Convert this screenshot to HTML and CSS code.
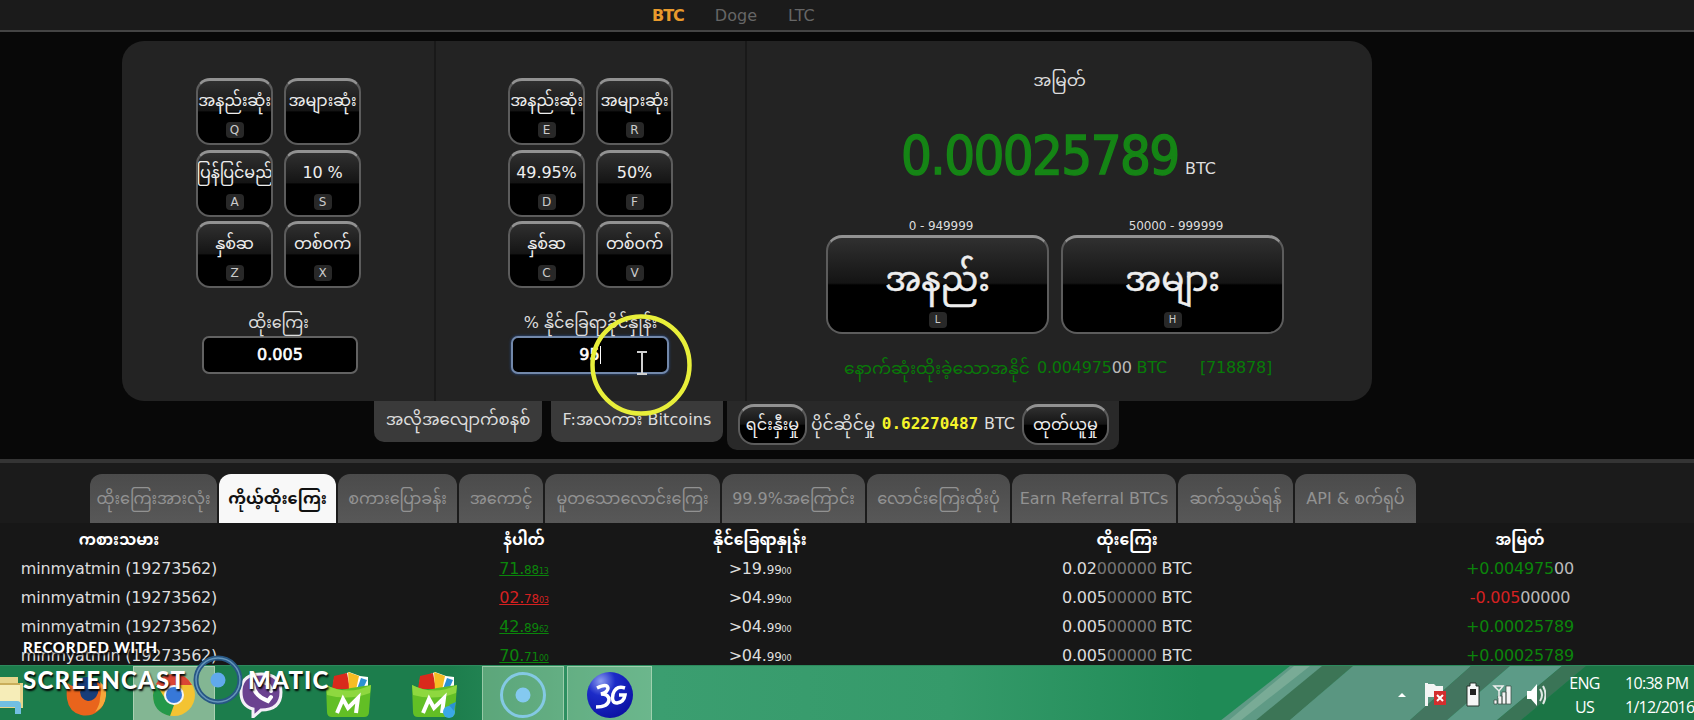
FILE: index.html
```html
<!DOCTYPE html>
<html lang="my">
<head>
    <meta charset="UTF-8">
    <meta name="viewport" content="width=device-width, initial-scale=1.0">
    <title>BTC</title>
    <link rel="stylesheet" href="styles.css">
</head>
<body>
    <nav class="coins">
        <a class="active">BTC</a>
        <a>Doge</a>
        <a>LTC</a>
    </nav>

    <main class="game">
        <div class="panel">
            <section class="controls bet">
                <div class="keys">
                    <button class="key"><span>အနည်းဆုံး</span><kbd>Q</kbd></button>
                    <button class="key"><span>အများဆုံး</span></button>
                    <button class="key"><span>ပြန်ပြင်မည်</span><kbd>A</kbd></button>
                    <button class="key"><span>10 %</span><kbd>S</kbd></button>
                    <button class="key"><span>နှစ်ဆ</span><kbd>Z</kbd></button>
                    <button class="key"><span>တစ်ဝက်</span><kbd>X</kbd></button>
                </div>
                <label class="field-label">ထိုးကြေး</label>
                <div class="field">0.005</div>
            </section>
            <section class="controls chance">
                <div class="keys">
                    <button class="key"><span>အနည်းဆုံး</span><kbd>E</kbd></button>
                    <button class="key"><span>အများဆုံး</span><kbd>R</kbd></button>
                    <button class="key"><span>49.95%</span><kbd>D</kbd></button>
                    <button class="key"><span>50%</span><kbd>F</kbd></button>
                    <button class="key"><span>နှစ်ဆ</span><kbd>C</kbd></button>
                    <button class="key"><span>တစ်ဝက်</span><kbd>V</kbd></button>
                </div>
                <label class="field-label">% နိုင်ခြေရာခိုင်နှုန်း</label>
                <div class="field focus">95<i class="caret"></i></div>
            </section>
            <section class="profit">
                <h2>အမြတ်</h2>
                <div class="amount"><b>0.00025789</b><span>BTC</span></div>
                <div class="rolls">
                    <div class="roll">
                        <small>0 - 949999</small>
                        <button class="big"><span>အနည်း</span><kbd>L</kbd></button>
                    </div>
                    <div class="roll">
                        <small>50000 - 999999</small>
                        <button class="big"><span>အများ</span><kbd>H</kbd></button>
                    </div>
                </div>
                <div class="last"><span class="last-label">နောက်ဆုံးထိုးခဲ့သောအနိုင်</span><span class="last-win">0.004975<em>00</em> BTC</span><span class="last-roll">[718878]</span></div>
            </section>
        </div>
        <div class="drawers">
            <div class="drawer auto">အလိုအလျောက်စနစ်</div>
            <div class="drawer free">F:အလကား Bitcoins</div>
            <div class="drawer wallet">
                <button class="pill">ရင်းနှီးမှု</button>
                <span class="own">ပိုင်ဆိုင်မှု</span>
                <b>0.62270487</b>
                <span class="unit">BTC</span>
                <button class="pill wide">ထုတ်ယူမှု</button>
            </div>
        </div>
    </main>

    <div class="tabs">
        <a class="tab t1">ထိုးကြေးအားလုံး</a>
        <a class="tab t2 active">ကိုယ့်ထိုးကြေး</a>
        <a class="tab t3">စကားပြောခန်း</a>
        <a class="tab t4">အကောင့်</a>
        <a class="tab t5">မူတသောလောင်းကြေး</a>
        <a class="tab t6">99.9%အကြောင်း</a>
        <a class="tab t7">လောင်းကြေးထိုးပုံ</a>
        <a class="tab t8">Earn Referral BTCs</a>
        <a class="tab t9">ဆက်သွယ်ရန်</a>
        <a class="tab t10">API &amp; စက်ရုပ်</a>
    </div>

    <div class="bets">
        <div class="row head"><span>ကစားသမား</span><span>နံပါတ်</span><span>နိုင်ခြေရာနှုန်း</span><span>ထိုးကြေး</span><span>အမြတ်</span></div>
        <div class="row"><span>minmyatmin (19273562)</span><span class="win num">71.<s>88</s><sub>13</sub></span><span>&gt;19.<s>99</s><sub>00</sub></span><span>0.02<i>000000</i> BTC</span><span class="win">+0.004975<em>00</em></span></div>
        <div class="row"><span>minmyatmin (19273562)</span><span class="lose num">02.<s>78</s><sub>03</sub></span><span>&gt;04.<s>99</s><sub>00</sub></span><span>0.005<i>00000</i> BTC</span><span class="lose">-0.005<em>00000</em></span></div>
        <div class="row"><span>minmyatmin (19273562)</span><span class="win num">42.<s>89</s><sub>62</sub></span><span>&gt;04.<s>99</s><sub>00</sub></span><span>0.005<i>00000</i> BTC</span><span class="win">+0.00025789</span></div>
        <div class="row"><span>minmyatmin (19273562)</span><span class="win num">70.<s>71</s><sub>00</sub></span><span>&gt;04.<s>99</s><sub>00</sub></span><span>0.005<i>00000</i> BTC</span><span class="win">+0.00025789</span></div>
    </div>

    <footer class="taskbar">
        <svg class="wallpaper" width="1694" height="55" viewBox="0 0 1694 55">
            <path fill="#5f9a85" d="M1290 0h62l-62 55h-70z"/>
            <path fill="#79ab96" d="M1294 0h16l-70 55h-12z"/>
            <path fill="#3c7556" d="M1322 0h31l-64 55h-34z"/>
            <path fill="#5a9681" d="M1353 0h118l-62 55h-120z"/>
            <path fill="#43755f" d="M1471 0h39l-64 55h-37z"/>
            <path fill="#5c9b87" d="M1510 0h52l-66 55h-50z"/>
            <path fill="#3a7456" d="M1562 0h24l-66 55h-24z"/>
            <path fill="#1b7545" d="M1586 0h108v55h-174z"/>
        </svg>
        <div class="apps">
            <div class="app folder">
                <svg width="24" height="42" viewBox="0 0 24 42"><path fill="#e6d58b" d="M0 3h18v6h5v25H0z"/><path fill="#f6edb8" d="M0 9h20v22H0z"/><path fill="#c9ae5a" d="M0 9h20v2H0z"/><path fill="#72bfe2" d="M0 27h17q4 0 4 4v9h-6v-7H0z"/></svg>
            </div>
            <div class="app firefox">
                <svg width="44" height="44" viewBox="0 0 44 44"><circle cx="22" cy="22" r="18" fill="#173d7a"/><path fill="#e9641c" d="M3 10q2 3 6 3 5-1 9 1l-3 5q1 8 8 9 7 0 10-8 1-6-2-12 8 4 9 13 1 11-7 17-7 6-17 4Q4 39 2 26 1 17 3 10z"/><path fill="#f7a63a" d="M35 9q7 5 6 14-1 11-11 16 5-7 5-14 2-8 0-16z"/></svg>
            </div>
            <div class="app chrome open">
                <svg width="44" height="44" viewBox="0 0 44 44"><circle cx="22" cy="22" r="21" fill="#f3c332"/><path fill="#da4635" d="M22 22 4 11Q10 1 22 1t18 11H22z"/><path fill="#24984a" d="M4 11 14 27l8 5-4 11Q1 39 1 22q0-6 3-11z"/><circle cx="22" cy="22" r="10" fill="#f4f4f4"/><circle cx="22" cy="22" r="8" fill="#3778d8"/></svg>
            </div>
            <div class="app viber">
                <svg width="44" height="46" viewBox="0 0 44 46"><path fill="#6b4290" stroke="#f4eff7" stroke-width="3" d="M22 2Q42 2 42 20 42 38 22 38l-8 7v-8Q2 34 2 20 2 2 22 2z"/><path fill="none" stroke="#fff" stroke-width="4" stroke-linecap="round" d="M14 12q1 12 15 17l3-4M24 10q7 1 8 9"/></svg>
            </div>
            <div class="app genie">
                <svg width="48" height="48" viewBox="0 0 48 48"><path fill="#fff" d="M9 8 24 1l11 4 8 1v12H8z"/><path fill="#d92a1c" d="m9 5 13-3 3 16H7z"/><path fill="#f6bd24" d="m23 1 11 4-3 14h-7z"/><path fill="#2b91d3" d="m36 7 6 2-4 9h-6z"/><path fill="#62bf25" d="M1 14q13 7 25 3l20-3-2 27q0 5-5 5H7q-5 0-5-5z"/><path fill="#8ed83f" d="M1 14q22 11 45 0l-1 8Q24 30 2 24z"/><path fill="none" stroke="#fff" stroke-width="4" d="m12 42 6-14 5 9 10-10-2 15"/></svg>
            </div>
            <div class="app genie2">
                <svg width="48" height="48" viewBox="0 0 48 48"><path fill="#fff" d="M9 8 24 1l11 4 8 1v12H8z"/><path fill="#d92a1c" d="m9 5 13-3 3 16H7z"/><path fill="#f6bd24" d="m23 1 11 4-3 14h-7z"/><path fill="#2b91d3" d="m36 7 6 2-4 9h-6z"/><path fill="#62bf25" d="M1 14q13 7 25 3l20-3-2 27q0 5-5 5H7q-5 0-5-5z"/><path fill="#8ed83f" d="M1 14q22 11 45 0l-1 8Q24 30 2 24z"/><path fill="none" stroke="#fff" stroke-width="4" d="m12 42 6-14 5 9 10-10-2 15"/><circle cx="38" cy="41" r="6" fill="#3aa8e8"/><path fill="#2b91d3" d="m38 34 7-3-2 9z"/></svg>
            </div>
            <div class="app recorder open">
                <svg width="48" height="48" viewBox="0 0 48 48"><circle cx="24" cy="24" r="21.5" fill="none" stroke="#84c9e4" stroke-width="3"/><circle cx="24" cy="24" r="7.5" fill="#84c9f0"/></svg>
            </div>
            <div class="app modem open">
                <svg width="48" height="48" viewBox="0 0 48 48"><defs><radialGradient id="ball" cx=".3" cy=".2" r=".9"><stop offset="0" stop-color="#8d9df0"/><stop offset=".35" stop-color="#1c2bc8"/><stop offset="1" stop-color="#0a0fa0"/></radialGradient></defs><circle cx="24" cy="24" r="23" fill="url(#ball)"/><path fill="none" stroke="#fff" stroke-width="3.5" d="M11 17q10-5 11 0 0 4-7 6 8 0 8 6-1 7-13 7M39 17q-9-3-12 6-2 9 4 9 7-1 8-8h-6"/></svg>
            </div>
        </div>
        <div class="tray">
            <svg width="150" height="30" viewBox="0 0 150 30">
                <path fill="#fff" d="m2 17 4-4 4 4z"/>
                <path fill="#f4f4f4" d="M29 3h3v23h-3zM32 4h6l2 2h7v11H32z"/><path fill="#d32e2e" d="M38 11h12v14H38z"/><path stroke="#fff" stroke-width="2" d="m41 15 6 6m0-6-6 6"/>
                <path fill="#f6f6f6" stroke="#26352d" d="M71 6h3V3h6v3h3v20H71z"/><path fill="#222" d="M74 9h6v6h-6z"/>
                <path fill="#f4f4f4" stroke="#34463c" stroke-width=".7" d="M98 20h3v4h-3zM102 16h4v8h-4zM106 12h4v12h-4zM110 6h5v18h-5z"/><path fill="none" stroke="#eee" stroke-width="1.5" d="M98 6h9l-4 5zM103 11v7"/>
                <path fill="#fff" d="M131 11h4l6-7v22l-6-7h-4z"/><path fill="none" stroke="#dfe9e4" stroke-width="2" d="M144 9q4 6 0 12M147 6q5 9 0 18"/>
            </svg>
            <div class="lang">ENG<br>US</div>
            <div class="clock">10:38 PM<br>1/12/2016</div>
        </div>
    </footer>

    <!-- recorder overlay -->
    <svg class="pointer" width="106" height="106" viewBox="0 0 106 106"><circle cx="53" cy="53" r="48.5" fill="none" stroke="#e8ef3a" stroke-width="4.5"/><path fill="none" stroke="#cfcfcf" stroke-width="2" d="M49 40h10m-5 0v22m-5 0h10"/></svg>
    <div class="watermark">
        <div class="wm-small">RECORDED WITH</div>
        <div class="wm-big"><span class="wm-left">SCREENCAST</span><svg width="50" height="50" viewBox="0 0 50 50"><circle cx="25" cy="25" r="22" fill="none" stroke="#275784" stroke-width="5"/><circle cx="25" cy="25" r="22" fill="none" stroke="#6595ba" stroke-width="1.5"/><circle cx="25" cy="25" r="7.5" fill="#61a9ec"/></svg><span class="wm-right">MATIC</span></div>
    </div>
</body>
</html>
```
FILE: styles.css
```css
* {
    box-sizing: border-box;
}
body {
    margin: 0;
    width: 1694px;
    height: 720px;
    overflow: hidden;
    position: relative;
    background-color: #080808;
    color: #ddd;
    font-family: "DejaVu Sans", "Noto Sans Myanmar", "Noto Sans", sans-serif;
    font-size: 16px;
    line-height: 20px;
    white-space: nowrap;
}
button {
    font-family: inherit;
    color: #eee;
    padding: 0;
    white-space: nowrap;
}
.coins {
    display: flex;
    gap: 31px;
    height: 32px;
    padding: 6px 0 0 652px;
    background-color: #1b1b1b;
    border-bottom: 2px solid #444;
    color: #666;
}
.coins .active {
    color: #e89a2c;
    font-weight: bold;
    letter-spacing: -1px;
}
.game {
    height: 427px;
    padding: 9px 0 0 122px;
}
.panel {
    display: flex;
    width: 1250px;
    height: 360px;
    border-radius: 22px;
    background-color: #232323;
}
.controls {
    width: 314px;
    padding: 37px 0 0 74px;
    border-right: 2px solid #191919;
}
.chance {
    width: 311px;
    padding-left: 72px;
}
.keys {
    display: grid;
    grid-template-columns: 77px 77px;
    gap: 4.5px 11px;
}
.key, .big, .pill {
    display: flex;
    flex-direction: column;
    align-items: center;
    overflow: hidden;
    border: 2px solid #5c5c5c;
    border-top: 3px solid #929292;
    background: linear-gradient(#303030, #141414 48%, #000 50%);
}
.key {
    height: 67px;
    border-radius: 14px;
    font-size: 16px;
}
.key span {
    height: 36px;
    line-height: 39px;
    letter-spacing: -0.1px;
}
kbd {
    width: 18px;
    height: 16px;
    margin-top: 5px;
    border-radius: 4px;
    background-color: #282828;
    color: #ccc;
    font: 12px/16px "DejaVu Sans", sans-serif;
    text-align: center;
}
.field-label {
    display: block;
    width: 165px;
    height: 36px;
    margin-top: 11.5px;
    line-height: 46px;
    text-align: center;
}
.field {
    width: 156px;
    height: 38px;
    margin: 0 0 0 6px;
    border: 2px solid #626262;
    border-radius: 7px;
    background-color: #000;
    color: #fff;
    font-size: 16px;
    line-height: 33px;
    text-align: center;
    -webkit-text-stroke: 0.6px #fff;
}
.field.focus {
    width: 158px;
    margin-left: 3px;
    border-color: #7288aa;
    box-shadow: 0 0 3px #294f91;
}
.caret {
    display: inline-block;
    width: 1px;
    height: 18px;
    background-color: #fff;
    vertical-align: middle;
}
.profit {
    width: 625px;
}
.profit h2 {
    margin: 28px 0 0;
    font-size: 17px;
    font-weight: normal;
    line-height: 22px;
    text-align: center;
}
.amount {
    display: flex;
    align-items: baseline;
    height: 85px;
    padding: 35px 0 0 154px;
    line-height: 60px;
}
.amount b {
    width: 284px;
    color: #158515;
    font-family: "DejaVu Sans Condensed", "DejaVu Sans", sans-serif;
    font-size: 54px;
    font-weight: normal;
    letter-spacing: -1.6px;
    -webkit-text-stroke: 1.4px #158515;
}
.rolls {
    display: flex;
    gap: 12px;
    padding: 41px 0 0 79px;
}
.roll {
    width: 223px;
    text-align: center;
}
.roll small {
    display: block;
    height: 18px;
    padding-left: 7px;
    font-size: 12px;
    line-height: 19px;
    letter-spacing: -0.1px;
}
.big {
    width: 223px;
    height: 99px;
    border-radius: 16px;
    font-size: 34px;
}
.big span {
    height: 73px;
    line-height: 83px;
    -webkit-text-stroke: 0.5px #eee;
}
.big kbd {
    margin-top: 1px;
    font-size: 10px;
}
.last {
    display: flex;
    height: 24px;
    margin: 22px 0 0 97px;
    color: #087a08;
    line-height: 24px;
}
.last-label {
    width: 193px;
    font-size: 17px;
}
.last-win {
    width: 163px;
}
.last em, .row em {
    color: #bbb;
    font-style: normal;
}
.last-win, .last-roll {
    letter-spacing: -0.2px;
}
.drawers {
    display: flex;
    padding-left: 252px;
}
.drawer {
    height: 41px;
    border-radius: 0 0 10px 10px;
    background-color: #3a3a3a;
    line-height: 38px;
    text-align: center;
    overflow: hidden;
}
.auto {
    width: 168px;
    margin-right: 9px;
    font-size: 16.5px;
}
.free {
    width: 172px;
    margin-right: 4px;
    letter-spacing: 0.1px;
}
.wallet {
    display: flex;
    align-items: center;
    width: 392px;
    height: 49px;
    padding: 0 0 3px 11px;
    background-color: #292929;
    line-height: 40px;
}
.pill {
    display: block;
    width: 69px;
    height: 41px;
    border-radius: 16px;
    font-size: 16px;
    line-height: 36px;
}
.pill.wide {
    width: 87px;
}
.own {
    width: 72px;
    padding-left: 4px;
    font-size: 17px;
    text-align: left;
}
.wallet b {
    width: 102px;
    color: #f5f52a;
    font-family: "DejaVu Sans Mono", monospace;
    font-size: 16px;
}
.unit {
    width: 38px;
    margin-left: 3px;
    text-align: left;
}
.tabs {
    display: flex;
    gap: 2px;
    height: 64px;
    padding: 11px 0 0 90px;
    border-top: 4px solid #343434;
    background-color: #1b1b1b;
}
.tab {
    height: 49px;
    border-radius: 12px 12px 0 0;
    background: linear-gradient(#4b4b4b, #585858);
    color: #929292;
    line-height: 50px;
    text-align: center;
    overflow: hidden;
}
.tab.active {
    background: #f8f8f8;
    color: #111;
    font-weight: bold;
}
.t1 { width: 127px; }
.t2 { width: 117px; }
.t3 { width: 119px; }
.t4 { width: 84px; }
.t5 { width: 175px; }
.t6 { width: 143px; }
.t7 { width: 143px; }
.t8 { width: 164px; }
.t9 { width: 115px; }
.t10 { width: 121px; }
.bets {
    height: 142px;
    overflow: hidden;
    background-color: #171717;
}
.row {
    display: grid;
    grid-template-columns: 400px 248px 224px 510px 276px;
    height: 29px;
    line-height: 31px;
    letter-spacing: -0.2px;
    text-align: center;
}
.row.head {
    height: 30px;
    line-height: 34px;
    color: #fff;
    font-size: 15.5px;
    font-weight: bold;
    letter-spacing: 0;
}
.row span:first-child {
    padding-right: 162px;
}
.row i {
    color: #777;
    font-style: normal;
}
.row s {
    font-size: 12px;
    text-decoration: none;
}
.row sub {
    font-size: 8px;
    vertical-align: baseline;
}
.win {
    color: #0b850b;
}
.lose {
    color: #d52121;
}
.num {
    text-decoration: underline;
}
.taskbar {
    display: flex;
    justify-content: space-between;
    position: relative;
    height: 55px;
    background: linear-gradient(90deg, #1c7d4c, #1c7d4c 450px, #3b9e70 660px, #359a6a 950px, #1f8b56 1200px);
    border-top: 1px solid #2c8a5c;
}
.wallpaper {
    position: absolute;
    left: 0;
    top: 0;
}
.apps, .tray {
    display: flex;
    position: relative;
}
.app {
    display: flex;
    align-items: center;
    justify-content: center;
    height: 55px;
    padding-top: 2px;
}
.app.open {
    background-color: rgba(190, 225, 190, 0.38);
    border: 1px solid rgba(210, 235, 210, 0.5);
}
.folder { width: 24px; margin-right: 40px; }
.firefox { width: 45px; margin-right: 24px; }
.app.chrome { width: 82px; background-color: rgba(200, 220, 195, 0.6); }
.viber { width: 92px; }
.genie { width: 84px; }
.genie2 { width: 88px; margin-right: 3px; }
.recorder { width: 82px; margin-right: 3px; }
.modem { width: 85px; }
.tray {
    color: #fff;
    font-family: "Open Sans", sans-serif;
    font-size: 16px;
    line-height: 24px;
    text-align: center;
    letter-spacing: -0.7px;
}
.tray svg {
    margin: 14px 20px 0 0;
}
.lang {
    width: 37px;
    margin: 5px 22px 0 0;
}
.clock {
    width: 69px;
    margin-top: 5px;
    text-align: left;
}
.pointer {
    position: absolute;
    left: 588px;
    top: 312px;
}
.watermark {
    position: absolute;
    left: 23px;
    top: 637px;
    color: #fff;
    font-family: Lato, sans-serif;
    font-weight: 900;
    text-shadow: 1px 2px 2px #000;
}
.wm-small {
    height: 18px;
    font-size: 15px;
    letter-spacing: 0.7px;
}
.wm-big {
    display: flex;
    align-items: center;
    height: 50px;
    font-size: 24px;
    letter-spacing: 1.2px;
}
.wm-left {
    width: 170px;
}
.wm-right {
    margin-left: 5px;
}
```
